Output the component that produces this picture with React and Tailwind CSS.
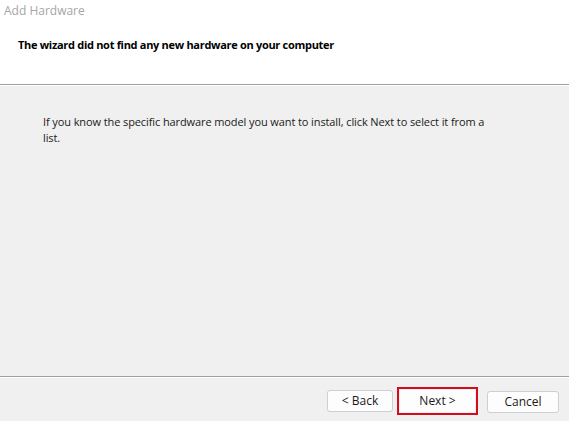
import React from "react";

const font = { fontFamily: '"Open Sans", "Noto Sans", sans-serif' };

const WizardButton = ({ children, width }) => (
  <button
    className={`${width} h-[22px] bg-[#fdfdfd] border border-[#cfcfcf] rounded-[3px] text-[12px] text-[#1a1a1a] leading-none`}
  >
    {children}
  </button>
);

const App = () => {
  return (
    <div
      className="w-[569px] h-[421px] bg-[#f0f0f0] flex flex-col overflow-hidden"
      style={font}
    >
      <div className="h-[85px] bg-white border-b border-[#a0a0a0] flex flex-col">
        <div className="pl-[4px] pt-[3px] text-[12px] text-[#a6a6a6] leading-[16px]">
          Add Hardware
        </div>
        <div className="pl-[18px] pt-[18px] text-[11px] font-bold text-black leading-[16px] tracking-[-0.3px]">
          The wizard did not find any new hardware on your computer
        </div>
      </div>
      <div className="h-px bg-white" />
      <div className="flex-1 pl-[43px] pt-[28px]">
        <p className="w-[450px] text-[11px] text-[#1a1a1a] leading-[16px] tracking-[-0.1px]">
          If you know the specific hardware model you want to install, click
          Next to select it from a list.
        </p>
      </div>
      <div className="h-px bg-[#a0a0a0]" />
      <div className="h-px bg-white" />
      <div className="h-[43px] flex items-center justify-end pr-[10px] pt-[2px]">
        <WizardButton width="w-[66px]">&lt; Back</WizardButton>
        <div className="ml-[4px] w-[81px] h-[28px] border-2 border-[#d40b1a] flex items-center justify-center">
          <button className="w-[75px] h-[22px] bg-[#fdfdfd] text-[12px] text-[#1a1a1a] leading-none">
            Next &gt;
          </button>
        </div>
        <div className="ml-[9px]">
          <WizardButton width="w-[72px]">Cancel</WizardButton>
        </div>
      </div>
    </div>
  );
};

export default App;
